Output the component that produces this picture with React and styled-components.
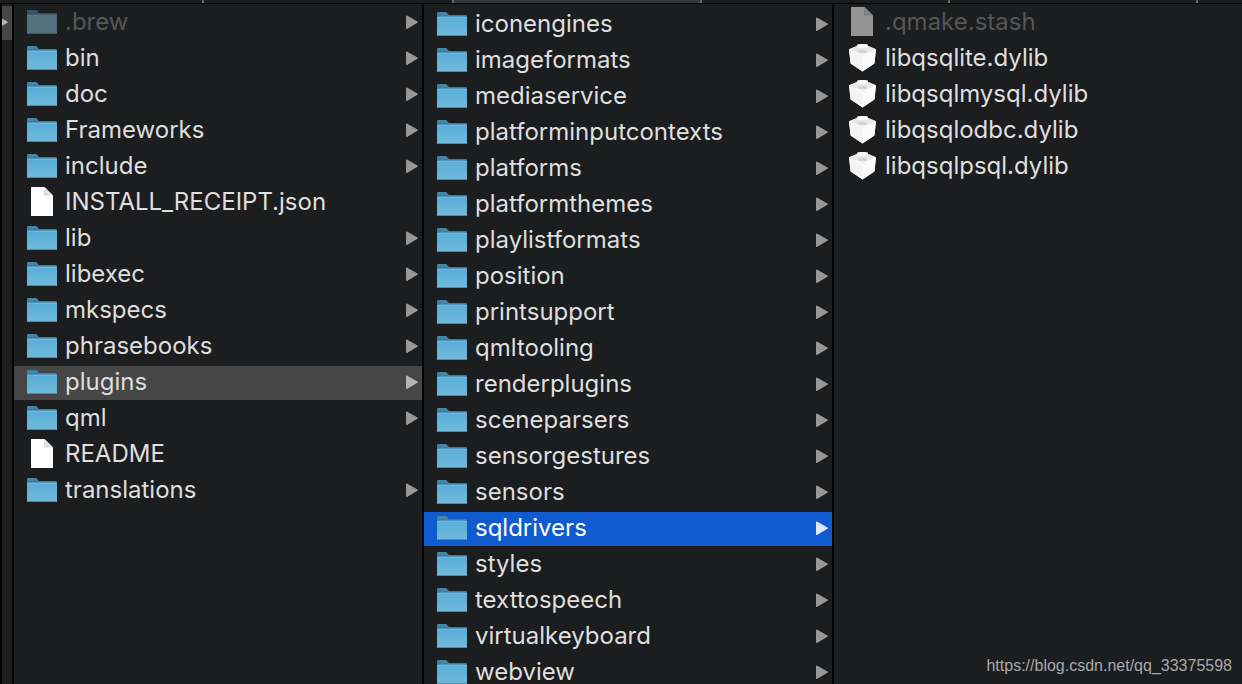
import React, { useState } from "react";
import styled, { createGlobalStyle } from "styled-components";

const GlobalStyle = createGlobalStyle`
  *, *::before, *::after { box-sizing: border-box; }
  body { margin: 0; background: #1c1d1f; }
`;

const Window = styled.div`
  position: relative;
  display: grid;
  grid-template-rows: auto 1fr;
  height: 100vh;
  overflow: hidden;
  background: #1c1d1f;
  color: #dfdfdf;
  font-family: Inter, "Liberation Sans", sans-serif;
`;

const TabStrip = styled.div`
  display: grid;
  grid-template-columns: 202fr 250fr 248fr 248fr 248fr 46fr;
  height: 4px;
  border-bottom: 1px solid #000000;
`;

const Tab = styled.div`
  background: ${(p) => (p.$active ? "#353638" : "#1a1b1c")};
  border-left: 2px solid #6b6b6c;

  &:first-child { border-left: 0; }
`;

const Browser = styled.main`
  display: grid;
  grid-template-columns: 12px repeat(3, minmax(0, 1fr));
  min-height: 0;
`;

const ParentColumn = styled.div`
  border-left: 2px solid #000000;
  padding-top: 2px;
`;

const ParentRow = styled.div`
  display: flex;
  align-items: center;
  height: 34px;
  background: #464646;
  overflow: hidden;
  color: #b4b4b4;

  svg { margin-left: -6px; }
`;

const Column = styled.ul`
  display: flex;
  flex-direction: column;
  gap: 2px;
  margin: 0;
  padding: ${(p) => p.$top}px 0 0;
  border-left: 2px solid #000000;
  list-style: none;
  overflow-y: auto;
  scrollbar-width: none;
`;

const selectionColors = { trail: "#464646", active: "#0f5bcf" };
const arrowColors = { trail: "#b4b4b4", active: "#dfe7f7" };

const Row = styled.button`
  display: flex;
  align-items: center;
  gap: 8px;
  width: 100%;
  height: 34px;
  padding: 0 4px 0 13px;
  border: 0;
  background: ${(p) => selectionColors[p.$selection] || "transparent"};
  color: ${(p) => (p.$selection === "active" ? "#ffffff" : p.$hidden ? "#555657" : "#dfdfdf")};
  font: inherit;
  font-size: 24px;
  line-height: 32px;
  text-align: left;

  .arrow { color: ${(p) => arrowColors[p.$selection] || "#989898"}; }
`;

const Name = styled.span`
  flex: 1;
  min-width: 0;
  height: 34px;
  overflow: hidden;
  white-space: nowrap;
  text-overflow: ellipsis;
`;

const Icon = styled.svg`
  flex: none;
  display: block;
  opacity: ${(p) => p.$opacity || 1};
`;

const SourceLink = styled.a`
  position: absolute;
  right: 10px;
  bottom: 9px;
  color: #a9a9aa;
  font-family: "Liberation Sans", Arial, sans-serif;
  font-size: 16px;
  line-height: 18px;
  text-decoration: none;
`;

function Arrow() {
  return (
    <Icon className="arrow" width="12" height="34" viewBox="0 0 12 34" aria-hidden="true">
      <path d="M0 10.6Q0 9.2 1.4 9.8L11.4 15.4Q12.6 16 11.4 16.7L1.4 22.8Q0 23.4 0 22Z" fill="currentColor" />
    </Icon>
  );
}

function FolderIcon({ faded }) {
  return (
    <Icon width="30" height="34" viewBox="0 0 30 34" $opacity={faded ? 0.55 : 1} aria-hidden="true">
      <path d="M0 5.2Q0 4 1.2 4H8.6Q9.6 4 10.2 4.8L11 6Q11.5 7 12.6 7H29Q30 7 30 8V12H0Z" fill="#4485a6" />
      <path d="M0 8.2H30" stroke="#2f617b" strokeWidth="0.8" />
      <path d="M0 9Q0 8.6 .6 8.6H29.4Q30 8.6 30 9V27Q30 28 29 28H1Q0 28 0 27Z" fill={faded ? "#7fb6cb" : "url(#folderFace)"} />
      <path d="M.5 9.3H29.5" stroke="#76c0e2" strokeWidth="0.8" />
      <path d="M.5 27.5H29.5" stroke="#4b8fae" strokeWidth="1" />
    </Icon>
  );
}

function FileIcon({ faded }) {
  return (
    <Icon width="30" height="34" viewBox="0 0 30 34" aria-hidden="true">
      <path d="M4 1H17.5L26 9.5V30H4Z" fill={faded ? "#959595" : "#ffffff"} />
      <path d="M17.5 1V8.5Q17.5 9.5 18.5 9.5H26Z" fill={faded ? "#858585" : "#e4e4e4"} />
      <path d="M17.5 4V8.5H22" fill="none" stroke={faded ? "#747474" : "#c8c8c8"} strokeWidth="0.8" />
    </Icon>
  );
}

function LibraryIcon() {
  return (
    <Icon width="30" height="34" viewBox="0 0 30 34" aria-hidden="true">
      <path d="M2 7.2L10 4V3Q10.5 2 15.5 2Q20.5 2 21 3V4L29 7.2L27.4 21.5L15.6 29.5L3.6 21.5Z" fill="#f5f5f5" />
      <path d="M2 7.2L15.5 14V29.5L3.6 21.5Z" fill="#f4f4f4" />
      <path d="M29 7.2L15.5 14V29.5L27.4 21.5Z" fill="#fbfbfb" />
      <path d="M2 7.2L10 4H21L29 7.2L15.5 14Z" fill="#e9e9e9" />
      <ellipse cx="15.5" cy="4" rx="5.2" ry="2" fill="#fafafa" />
      <path d="M11 9.5V11Q15.5 13.4 20 11V9.5Z" fill="#f2f2f2" />
      <ellipse cx="15.5" cy="9.4" rx="4.6" ry="1.7" fill="#d2d2d2" />
      <path d="M2.4 7.6L15.5 14L28.6 7.6" fill="none" stroke="#ffffff" strokeWidth="0.8" />
    </Icon>
  );
}

const toFolder = (name) => ({ name, kind: "folder" });

const formulaItems = [
  { name: ".brew", kind: "folder", hidden: true },
  ...["bin", "doc", "Frameworks", "include"].map(toFolder),
  { name: "INSTALL_RECEIPT.json", kind: "file" },
  ...["lib", "libexec", "mkspecs", "phrasebooks", "plugins", "qml"].map(toFolder),
  { name: "README", kind: "file" },
  toFolder("translations"),
];

const pluginItems = [
  "iconengines", "imageformats", "mediaservice", "platforminputcontexts", "platforms",
  "platformthemes", "playlistformats", "position", "printsupport", "qmltooling",
  "renderplugins", "sceneparsers", "sensorgestures", "sensors", "sqldrivers",
  "styles", "texttospeech", "virtualkeyboard", "webview",
].map(toFolder);

const driverItems = [
  { name: ".qmake.stash", kind: "file", hidden: true },
  ...["libqsqlite.dylib", "libqsqlmysql.dylib", "libqsqlodbc.dylib", "libqsqlpsql.dylib"].map(
    (name) => ({ name, kind: "library" })
  ),
];

const icons = { folder: FolderIcon, file: FileIcon, library: LibraryIcon };

function FileColumn({ label, items, top, selected, tone, onSelect }) {
  return (
    <Column aria-label={label} $top={top}>
      {items.map((item) => {
        const Glyph = icons[item.kind];
        return (
          <li key={item.name}>
            <Row
              type="button"
              $hidden={item.hidden}
              $selection={item.name === selected ? tone : undefined}
              onClick={() => onSelect(item.name)}
            >
              <Glyph faded={item.hidden} />
              <Name>{item.name}</Name>
              {item.kind === "folder" && <Arrow />}
            </Row>
          </li>
        );
      })}
    </Column>
  );
}

const Definitions = styled.svg`
  position: absolute;
`;

export default function App() {
  const [formula, setFormula] = useState("plugins");
  const [plugin, setPlugin] = useState("sqldrivers");
  const [driver, setDriver] = useState(null);

  return (
    <Window>
      <GlobalStyle />
      <Definitions width="0" height="0" aria-hidden="true">
        <defs>
          <linearGradient id="folderFace" x1="0" y1="0" x2="0" y2="1">
            <stop offset="0" stopColor="#58add9" />
            <stop offset="1" stopColor="#70b9da" />
          </linearGradient>
        </defs>
      </Definitions>
      <TabStrip>
        <Tab />
        <Tab />
        <Tab $active />
        <Tab />
        <Tab />
        <Tab />
      </TabStrip>
      <Browser>
        <ParentColumn>
          <ParentRow>
            <Arrow />
          </ParentRow>
        </ParentColumn>
        <FileColumn label="Formula" items={formulaItems} top={2} selected={formula} tone="trail" onSelect={setFormula} />
        <FileColumn label="plugins" items={pluginItems} top={4} selected={plugin} tone="active" onSelect={setPlugin} />
        <FileColumn label="sqldrivers" items={driverItems} top={2} selected={driver} tone="active" onSelect={setDriver} />
      </Browser>
      <SourceLink href="https://blog.csdn.net/qq_33375598">https://blog.csdn.net/qq_33375598</SourceLink>
    </Window>
  );
}
